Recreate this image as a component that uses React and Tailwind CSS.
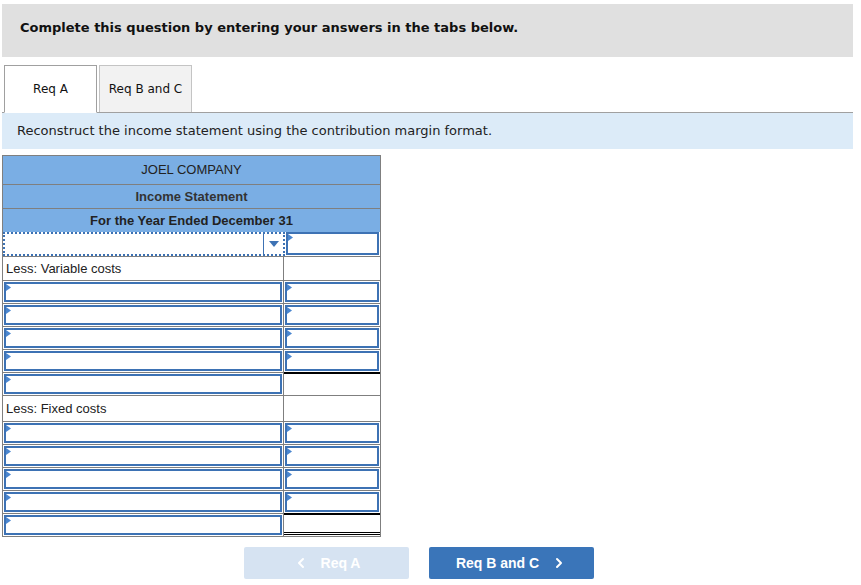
import { ChevronLeft, ChevronRight } from 'lucide-react';

const Arrow = () => (
  <svg className="absolute left-0 top-0" width="5" height="7" viewBox="0 0 5 7">
    <path d="M0 0 L5 3.5 L0 7 Z" fill="#4a86cf" />
  </svg>
);

// blue input box with the little marker in its corner
const Input = () => (
  <div className="relative h-full border-2 border-[#3d72b4] bg-white">
    <Arrow />
  </div>
);

const Row = ({ left, right, h = 'h-[23px]' }) => (
  <div className={`flex ${h} border-t border-[#7f7f7f]`}>
    <div className="w-[281px] shrink-0 border-r border-[#7f7f7f]">{left}</div>
    <div className="flex-1">{right}</div>
  </div>
);

const Label = ({ children }) => (
  <div className="flex h-full items-center pl-[3px] text-[13px] text-[#222]">{children}</div>
);

const Total = ({ double }) => (
  <div className={`h-full border-t-2 border-black ${double ? 'border-b-[3px] border-double' : ''}`} />
);

export default function App() {
  return (
    <div className="w-[861px] h-[585px] bg-white relative" style={{ fontFamily: '"DejaVu Sans", Verdana, sans-serif' }}>
      <div className="pt-[4px] pl-[2px] w-[853px]">
        <div className="h-[53px] bg-[#e0e0e0] pl-[18px] pt-[14px] text-[13px] font-bold text-[#111]">
          Complete this question by entering your answers in the tabs below.
        </div>

        {/* tabs */}
        <div className="mt-[8px] flex items-end border-b border-[#a0a0a0] pl-[2px] h-[48px]">
          <div className="w-[93px] h-[48px] -mb-px border border-[#a0a0a0] border-b-white bg-white flex items-center justify-center text-[12px] text-[#111]">
            Req A
          </div>
          <div className="ml-[2px] w-[93px] h-[47px] border border-b-0 border-[#c4c4c4] bg-[#f2f2f2] flex items-center justify-center text-[12px] text-[#111]">
            Req B and C
          </div>
        </div>

        <div className="h-[36px] bg-[#dcebf8] pl-[15px] flex items-center text-[13px] text-[#222]">
          Reconstruct the income statement using the contribution margin format.
        </div>
      </div>

      {/* statement */}
      <div className="ml-[2px] mt-[6px] w-[379px] border border-[#7f7f7f]" style={{ fontFamily: '"Liberation Sans", Arial, sans-serif' }}>
        <div className="h-[28px] bg-[#7aaee4] flex items-center justify-center text-[13px] text-[#222]">JOEL COMPANY</div>
        <div className="h-[24px] bg-[#7aaee4] border-t border-[#7f7f7f] flex items-center justify-center text-[13px] font-bold text-[#333]">Income Statement</div>
        <div className="h-[24px] bg-[#7aaee4] border-t border-[#7f7f7f] flex items-center justify-center text-[13px] font-bold text-[#222]">For the Year Ended December 31</div>

        {/* dropdown row */}
        <div className="flex h-[24px]">
          <div className="w-[282px] shrink-0 flex border-2 border-dotted border-[#3d72b4]">
            <div className="flex-1" />
            <div className="w-[20px] border-l border-[#3d72b4] flex items-center justify-center">
              <svg width="10" height="6" viewBox="0 0 10 6"><path d="M0 0 H10 L5 6 Z" fill="#3d72b4" /></svg>
            </div>
          </div>
          <div className="flex-1 p-px pt-0"><Input /></div>
        </div>

        <Row left={<Label>Less: Variable costs</Label>} right={null} h="h-[24px]" />
        <Row left={<div className="h-full p-px"><Input /></div>} right={<div className="h-full p-px"><Input /></div>} />
        <Row left={<div className="h-full p-px"><Input /></div>} right={<div className="h-full p-px"><Input /></div>} />
        <Row left={<div className="h-full p-px"><Input /></div>} right={<div className="h-full p-px"><Input /></div>} />
        <Row left={<div className="h-full p-px"><Input /></div>} right={<div className="h-full p-px"><Input /></div>} />
        <Row left={<div className="h-full p-px"><Input /></div>} right={<div className="h-full -mt-px"><Total /></div>} />
        <Row left={<Label>Less: Fixed costs</Label>} right={null} h="h-[26px]" />
        <Row left={<div className="h-full p-px"><Input /></div>} right={<div className="h-full p-px"><Input /></div>} />
        <Row left={<div className="h-full p-px"><Input /></div>} right={<div className="h-full p-px"><Input /></div>} />
        <Row left={<div className="h-full p-px"><Input /></div>} right={<div className="h-full p-px"><Input /></div>} />
        <Row left={<div className="h-full p-px"><Input /></div>} right={<div className="h-full p-px"><Input /></div>} />
        <Row left={<div className="h-full p-px"><Input /></div>} right={<div className="h-full -mt-px"><Total double /></div>} />
      </div>

      {/* nav buttons */}
      <div className="mt-[10px] flex gap-[20px] pl-[244px]" style={{ fontFamily: '"Liberation Sans", Arial, sans-serif' }}>
        <div className="w-[165px] h-[32px] rounded-[2px] bg-[#d6e3f2] flex items-center justify-center gap-[12px] text-[14px] font-bold text-white">
          <ChevronLeft size={16} strokeWidth={3} />
          <span>Req A</span>
        </div>
        <div className="w-[165px] h-[32px] rounded-[2px] bg-[#3a75b9] flex items-center justify-center gap-[12px] text-[14px] font-bold text-white">
          <span>Req B and C</span>
          <ChevronRight size={16} strokeWidth={3} />
        </div>
      </div>
    </div>
  );
}
